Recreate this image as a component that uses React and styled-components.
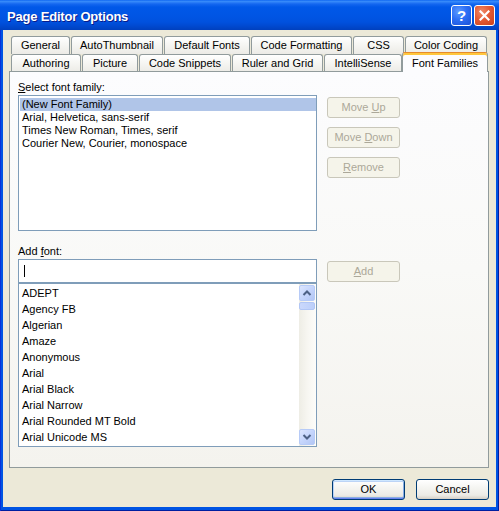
import React from 'react';
import styled, { createGlobalStyle, css } from 'styled-components';

const Global = createGlobalStyle`
  html, body { margin: 0; padding: 0; background: #ECE9D8; }
  body { font-family: "Liberation Sans", Arial, sans-serif; font-size: 11px; color: #000; }
  * { box-sizing: border-box; }
`;

const Window = styled.div`
  width: 499px;
  height: 511px;
  display: flex;
  flex-direction: column;
  overflow: hidden;
`;

const TitleBar = styled.div`
  height: 30px;
  flex: none;
  display: flex;
  align-items: flex-start;
  padding: 5px 4px 0 7px;
  background: linear-gradient(to bottom,
    #0058EE 0px, #3A8FFB 1px, #3083F8 2px, #1467F0 4px, #0058E8 7px,
    #0055E4 16px, #0051DE 22px, #0049D0 26px, #0040BE 30px);
`;

const Title = styled.div`
  flex: 1;
  margin-top: 4px;
  color: #fff;
  font: bold 13px/16px "Liberation Sans", Arial, sans-serif;
  letter-spacing: -0.2px;
  text-shadow: 1px 1px 0 #0A1C8A;
`;

const CaptionButtons = styled.div`
  display: flex;
  gap: 2px;
`;

const CaptionButton = styled.div`
  width: 21px;
  height: 21px;
  border: 1px solid #fff;
  border-radius: 3px;
  display: flex;
  align-items: center;
  justify-content: center;
  color: #fff;
  font: bold 15px/1 "Liberation Sans", Arial, sans-serif;
  ${(p) => p.$close
    ? css`background: radial-gradient(circle at 35% 30%, #F08A68 0%, #E45A35 45%, #C8401C 100%);`
    : css`background: radial-gradient(circle at 35% 30%, #5E9BFF 0%, #2D6FF5 45%, #1A4FD6 100%);`}
`;

const Frame = styled.div`
  flex: 1;
  display: flex;
  padding: 0 3px 4px 3px;
  background: #0054E3;
  box-shadow: inset 1px 0 0 #0831D9, inset -1px 0 0 #001EA0, inset 0 -1px 0 #001EA0;
`;

const Body = styled.div`
  flex: 1;
  display: flex;
  flex-direction: column;
  background: #ECE9D8;
  padding: 6px 7px 7px 6px;
`;

const TabStrip = styled.div`
  display: flex;
  flex-direction: column;
  margin-left: 2px;
`;

const TabRow = styled.div`
  display: flex;
  gap: 1px;
  height: 18px;
`;

const Tab = styled.div`
  height: 18px;
  flex: none;
  border: 1px solid #919B9C;
  border-bottom: none;
  border-radius: 3px 3px 0 0;
  background: linear-gradient(to bottom, #FFFFFF 0%, #F7F7F4 40%, #ECEBE6 100%);
  text-align: center;
  white-space: nowrap;
  font-size: 11px;
  line-height: 14px;
  padding-top: 1px;
  ${(p) => p.$active && css`
    position: relative;
    z-index: 2;
    height: 20px;
    margin-top: -2px;
    margin-left: -1px;
    border-top: 1px solid #E68B2C;
    background: #FCFCFE;
    box-shadow: inset 0 2px 0 #FFC73C;
    padding-top: 3px;
  `}
`;

const Panel = styled.div`
  position: relative;
  z-index: 1;
  height: 397px;
  margin-top: -1px;
  border: 1px solid #919B9C;
  background: linear-gradient(to bottom, #FCFCFE 0%, #F9F9F7 50%, #F4F3EE 100%);
  padding: 9px 0 0 8px;
  display: flex;
  flex-direction: column;
  gap: 14px;
`;

const Section = styled.div`
  display: grid;
  grid-template-columns: 299px 73px;
  column-gap: 10px;
  align-items: start;
`;

const Label = styled.div`
  grid-column: 1;
  height: 13px;
  line-height: 13px;
  margin-bottom: 1px;
  white-space: nowrap;
`;

const ListBox = styled.div`
  grid-column: 1;
  height: 136px;
  border: 1px solid #7F9DB9;
  background: #fff;
  padding: 2px 0 0 1px;
`;

const FamilyItem = styled.div`
  height: 13px;
  line-height: 13px;
  padding-left: 2px;
  white-space: nowrap;
  background: ${(p) => (p.$selected ? '#B0C5E8' : 'transparent')};
`;

const ButtonColumn = styled.div`
  grid-column: 2;
  display: flex;
  flex-direction: column;
  gap: 9px;
  padding-top: 2px;
`;

const Button = styled.div`
  width: 73px;
  height: 21px;
  border-radius: 3px;
  display: flex;
  align-items: center;
  justify-content: center;
  font-size: 11px;
  line-height: 13px;
  white-space: nowrap;
  ${(p) => p.$disabled
    ? css`
      border: 1px solid #C9C7BA;
      background: #F5F4EA;
      color: #ACA899;
    `
    : css`
      border: 1px solid #003C74;
      background: linear-gradient(to bottom, #FFFFFF 0%, #F4F4F0 45%, #ECEBE6 80%, #D6D0C5 100%);
      color: #000;
    `}
  ${(p) => p.$default && css`
    box-shadow: inset 0 1px 0 #CEE7FF, inset 0 -1px 0 #6982EE, inset 1px 0 0 #B8D2F8, inset -1px 0 0 #89ADE4,
      inset 0 2px 0 #BCD4F6, inset 0 -2px 0 #89ADE4;
  `}
`;

const ButtonText = styled.span`
  white-space: pre;
  u { text-decoration: underline; text-underline-offset: 1px; }
`;

const FieldStack = styled.div`
  grid-column: 1;
  display: flex;
  flex-direction: column;
`;

const TextBox = styled.div`
  height: 24px;
  border: 1px solid #7F9DB9;
  background: #fff;
  display: flex;
  align-items: center;
  padding-left: 5px;
`;

const Caret = styled.span`
  width: 1px;
  height: 12px;
  background: #000;
`;

const FontList = styled.div`
  height: 164px;
  border: 1px solid #7F9DB9;
  background: #fff;
  display: flex;
`;

const FontItems = styled.div`
  flex: 1;
  padding-top: 1px;
  overflow: hidden;
`;

const FontItem = styled.div`
  height: 16px;
  line-height: 16px;
  padding-left: 3px;
  white-space: nowrap;
`;

const ScrollBar = styled.div`
  width: 17px;
  flex: none;
  display: flex;
  flex-direction: column;
  padding: 1px 1px 1px 0;
  background: linear-gradient(to right, #EEEDE5 0%, #F7F6F1 50%, #FDFDFA 100%);
`;

const ScrollButton = styled.div`
  width: 16px;
  height: 16px;
  flex: none;
  border: 1px solid #B7CBF7;
  border-radius: 2px;
  background: linear-gradient(135deg, #DCE6FE 0%, #C5D5FC 50%, #B2C6F5 100%);
  display: flex;
  align-items: center;
  justify-content: center;
`;

const Track = styled.div`
  flex: 1;
  padding-top: 1px;
`;

const Thumb = styled.div`
  width: 16px;
  height: 8px;
  border: 1px solid #B1C6F5;
  border-radius: 2px;
  background: linear-gradient(to right, #CAD8FC, #BCCFFA);
`;

const Footer = styled.div`
  margin-top: 11px;
  display: flex;
  justify-content: flex-end;
  gap: 11px;
`;

const Chevron = ({ up }) => (
  <svg width="10" height="8" viewBox="0 0 10 8">
    <polyline
      points={up ? '1.5,6 5,2.5 8.5,6' : '1.5,2 5,5.5 8.5,2'}
      fill="none"
      stroke="#4D6185"
      strokeWidth="2"
    />
  </svg>
);

const CloseGlyph = () => (
  <svg width="11" height="11" viewBox="0 0 11 11">
    <path d="M1.5 1.5 L9.5 9.5 M9.5 1.5 L1.5 9.5" stroke="#fff" strokeWidth="2.2" strokeLinecap="square" />
  </svg>
);

const row1 = [
  ['General', 59], ['AutoThumbnail', 92], ['Default Fonts', 86],
  ['Code Formatting', 101], ['CSS', 51], ['Color Coding', 82],
];
const row2 = [
  ['Authoring', 70], ['Picture', 56], ['Code Snippets', 92],
  ['Ruler and Grid', 91], ['IntelliSense', 78], ['Font Families', 86, true],
];

const families = [
  '(New Font Family)',
  'Arial, Helvetica, sans-serif',
  'Times New Roman, Times, serif',
  'Courier New, Courier, monospace',
];

const fonts = [
  'ADEPT', 'Agency FB', 'Algerian', 'Amaze', 'Anonymous', 'Arial',
  'Arial Black', 'Arial Narrow', 'Arial Rounded MT Bold', 'Arial Unicode MS',
];

export default function App() {
  return (
    <>
      <Global />
      <Window>
        <TitleBar>
          <Title>Page Editor Options</Title>
          <CaptionButtons>
            <CaptionButton>?</CaptionButton>
            <CaptionButton $close><CloseGlyph /></CaptionButton>
          </CaptionButtons>
        </TitleBar>
        <Frame>
          <Body>
            <TabStrip>
              <TabRow>
                {row1.map(([t, w]) => (
                  <Tab key={t} style={{ width: w }}>{t}</Tab>
                ))}
              </TabRow>
              <TabRow>
                {row2.map(([t, w, a]) => (
                  <Tab key={t} $active={a} style={{ width: w }}>{t}</Tab>
                ))}
              </TabRow>
            </TabStrip>
            <Panel>
              <Section>
                <Label><u>S</u>elect font family:</Label>
                <ListBox>
                  {families.map((f, i) => (
                    <FamilyItem key={f} $selected={i === 0}>{f}</FamilyItem>
                  ))}
                </ListBox>
                <ButtonColumn>
                  <Button $disabled><ButtonText>Move <u>U</u>p</ButtonText></Button>
                  <Button $disabled><ButtonText>Move <u>D</u>own</ButtonText></Button>
                  <Button $disabled><ButtonText><u>R</u>emove</ButtonText></Button>
                </ButtonColumn>
              </Section>
              <Section>
                <Label>Add <u>f</u>ont:</Label>
                <FieldStack>
                  <TextBox><Caret /></TextBox>
                  <FontList>
                    <FontItems>
                      {fonts.map((f) => <FontItem key={f}>{f}</FontItem>)}
                    </FontItems>
                    <ScrollBar>
                      <ScrollButton><Chevron up /></ScrollButton>
                      <Track><Thumb /></Track>
                      <ScrollButton><Chevron /></ScrollButton>
                    </ScrollBar>
                  </FontList>
                </FieldStack>
                <ButtonColumn>
                  <Button $disabled><ButtonText><u>A</u>dd</ButtonText></Button>
                </ButtonColumn>
              </Section>
            </Panel>
            <Footer>
              <Button $default><ButtonText>OK</ButtonText></Button>
              <Button><ButtonText>Cancel</ButtonText></Button>
            </Footer>
          </Body>
        </Frame>
      </Window>
    </>
  );
}
